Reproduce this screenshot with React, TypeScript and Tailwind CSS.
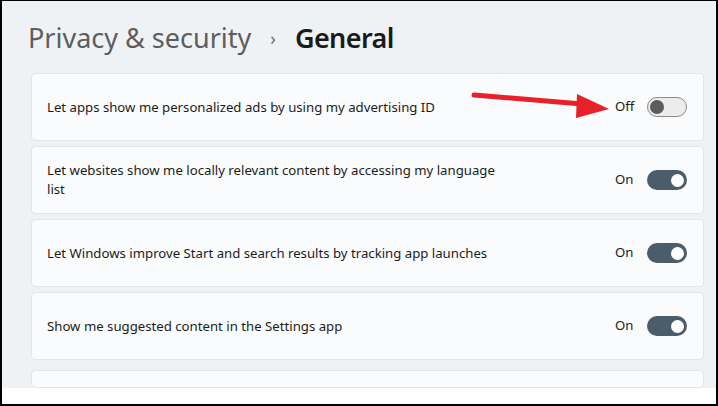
import React from 'react';

interface Setting {
     label: string;
     on: boolean;
}

const settings: Setting[] = [
     { label: 'Let apps show me personalized ads by using my advertising ID', on: false },
     { label: 'Let websites show me locally relevant content by accessing my language list', on: true },
     { label: 'Let Windows improve Start and search results by tracking app launches', on: true },
     { label: 'Show me suggested content in the Settings app', on: true },
];

const Toggle: React.FC<{ on: boolean }> = ({ on }) => {
     if (on) {
          return (
               <span className="flex h-[20px] w-[40px] items-center justify-end rounded-full bg-[#4b5d6a] pr-[3px]">
                    <span className="h-[13px] w-[13px] rounded-full bg-white" />
               </span>
          );
     }
     return (
          <span className="flex h-[20px] w-[40px] items-center rounded-full border border-[#8a8a8a] bg-[#ececec] pl-[2px]">
               <span className="h-[14px] w-[14px] rounded-full bg-[#5c5c5c]" />
          </span>
     );
};

const SettingCard: React.FC<{ setting: Setting }> = ({ setting }) => (
     <div className="flex h-[68px] items-center justify-between rounded-[4px] border border-[#e3e6e9] bg-[#fafbfc] pl-[15px] pr-[16px]">
          <span className="max-w-[460px] text-[13.2px] leading-[19px] text-[#1b1b1b]">{setting.label}</span>
          <div className="flex items-center gap-[12px]">
               <span className="w-[20px] text-[13.2px] text-[#1b1b1b]">{setting.on ? 'On' : 'Off'}</span>
               <Toggle on={setting.on} />
          </div>
     </div>
);

export default function App() {
     return (
          <div
               className="relative flex h-[406px] w-[718px] flex-col overflow-hidden border-2 border-t border-black bg-white"
               style={{ fontFamily: '"Noto Sans", "Open Sans", sans-serif' }}
          >
               <div className="flex h-[387px] flex-col overflow-hidden bg-[#eef2f5] pl-[29px] pr-[12px]">
                    <div className="-ml-[3px] flex items-center gap-[19px] pt-[17px] text-[27px] leading-[40px]">
                         <span className="text-[#5d5d5d]">Privacy &amp; security</span>
                         <span className="text-[18px] text-[#6a6a6a]">›</span>
                         <span className="font-semibold tracking-[-0.6px] text-[#1a1a1a]">General</span>
                    </div>
                    <div className="mt-[15px] flex flex-col gap-[5px]">
                         {settings.map((s) => (
                              <SettingCard key={s.label} setting={s} />
                         ))}
                    </div>
                    <div className="mt-[10px] h-[40px] rounded-[4px] border border-[#e3e6e9] bg-[#fafbfc]" />
               </div>

               {/* red arrow over the first card */}
               <svg className="absolute left-0 top-0" width="718" height="406" viewBox="0 0 718 406">
                    <line x1="472" y1="94" x2="580" y2="103" stroke="#e8202a" strokeWidth="5" strokeLinecap="round" />
                    <polygon points="575,93 607,108 574,117" fill="#e8202a" />
               </svg>
          </div>
     );
}
